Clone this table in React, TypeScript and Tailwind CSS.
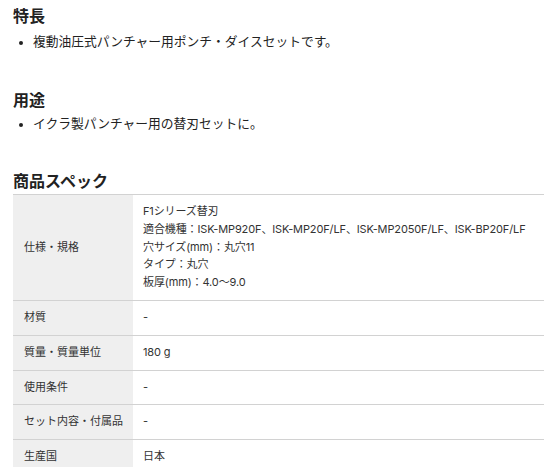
import React from "react";

const features = ["複動油圧式パンチャー用ポンチ・ダイスセットです。"];
const uses = ["イクラ製パンチャー用の替刃セットに。"];

const specs: { label: string; lines: string[] }[] = [
  {
    label: "仕様・規格",
    lines: [
      "F1シリーズ替刃",
      "適合機種：ISK-MP920F、ISK-MP20F/LF、ISK-MP2050F/LF、ISK-BP20F/LF",
      "穴サイズ(mm)：丸穴11",
      "タイプ：丸穴",
      "板厚(mm)：4.0〜9.0",
    ],
  },
  { label: "材質", lines: ["-"] },
  { label: "質量・質量単位", lines: ["180 g"] },
  { label: "使用条件", lines: ["-"] },
  { label: "セット内容・付属品", lines: ["-"] },
  { label: "生産国", lines: ["日本"] },
];

const BulletList = ({ items }: { items: string[] }) => (
  <ul className="pl-[20px] list-disc marker:text-[11px]">
    {items.map((item, i) => (
      <li key={i} className="text-[12.75px] leading-[20px] text-[#222]">
        {item}
      </li>
    ))}
  </ul>
);

export default function App() {
  return (
    <div
      className="bg-white min-h-[467px] pl-[13px] pt-[4px] overflow-hidden"
      style={{ fontFamily: '"Inter", "Noto Sans CJK JP", sans-serif' }}
    >
      {/* 特長 */}
      <h2 className="text-[16px] font-bold leading-[24px] text-[#222]">特長</h2>
      <div className="mt-[4px]">
        <BulletList items={features} />
      </div>

      {/* 用途 */}
      <h2 className="mt-[36px] text-[16px] font-bold leading-[24px] text-[#222]">用途</h2>
      <div className="mt-[2px]">
        <BulletList items={uses} />
      </div>

      {/* 商品スペック */}
      <h2 className="mt-[35px] text-[16px] font-bold leading-[24px] text-[#222]">商品スペック</h2>
      <div className="mt-[1px] border-t border-[#d2d2d2]">
        {specs.map((row, i) => (
          <div key={i} className="flex border-b border-[#d2d2d2] text-[11px] leading-[17.8px] text-[#333]">
            <div className="w-[120px] shrink-0 bg-[#efefef] pl-[11px] py-[8px] flex items-center">
              {row.label}
            </div>
            <div className="flex-1 pl-[10px] py-[8px] whitespace-nowrap tracking-[-0.12px]">
              {row.lines.map((line, j) => (
                <div key={j}>{line}</div>
              ))}
            </div>
          </div>
        ))}
      </div>
    </div>
  );
}
